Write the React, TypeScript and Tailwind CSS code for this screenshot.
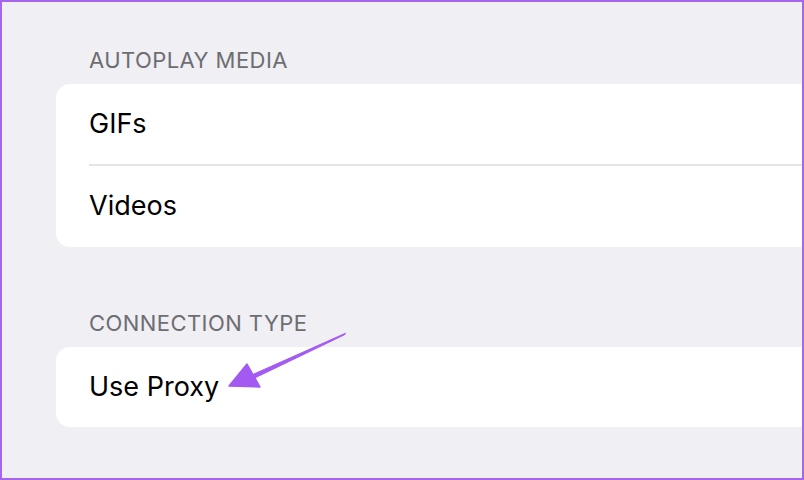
// Réglages : médias en lecture auto + type de connexion
export default function App() {
  return (
    <div
      className="relative w-[804px] h-[480px] overflow-hidden border-2 border-[#a566ee] bg-[#efeff4]"
      style={{ fontFamily: "Inter, 'Noto Sans', sans-serif" }}
    >
      <div className="pl-[54px] pt-[44px]">
        {/* Autoplay media */}
        <div className="pl-[33px] text-[22px] leading-[28px] text-[#6d6d72] tracking-[0.02em]">
          AUTOPLAY MEDIA
        </div>
        <div className="mt-[10px] rounded-l-[14px] bg-white">
          <div className="flex h-[80px] items-center pl-[33px] text-[27px] text-black">GIFs</div>
          <div className="ml-[33px] h-[2px] bg-[#e4e4e6]" />
          <div className="flex h-[81px] items-center pl-[33px] text-[27px] text-black">Videos</div>
        </div>

        {/* Connection type */}
        <div className="mt-[62px] pl-[33px] text-[22px] leading-[28px] text-[#6d6d72] tracking-[0.02em]">
          CONNECTION TYPE
        </div>
        <div className="mt-[10px] rounded-l-[14px] bg-white">
          <div className="flex h-[80px] items-center pl-[33px] text-[27px] text-black">Use Proxy</div>
        </div>
      </div>

      {/* annotation arrow */}
      <svg className="absolute left-0 top-0" width="804" height="480" viewBox="0 0 804 480">
        <polygon
          points="343.6,331.2 342.4,332.8 249,377.8 251.5,372.2"
          fill="#a25af2"
          stroke="#a25af2"
          strokeWidth="1"
          strokeLinejoin="round"
        />
        <polygon points="227,384 245,362 258,385" fill="#a25af2" stroke="#a25af2" strokeWidth="1.5" strokeLinejoin="round" />
      </svg>
    </div>
  );
}
